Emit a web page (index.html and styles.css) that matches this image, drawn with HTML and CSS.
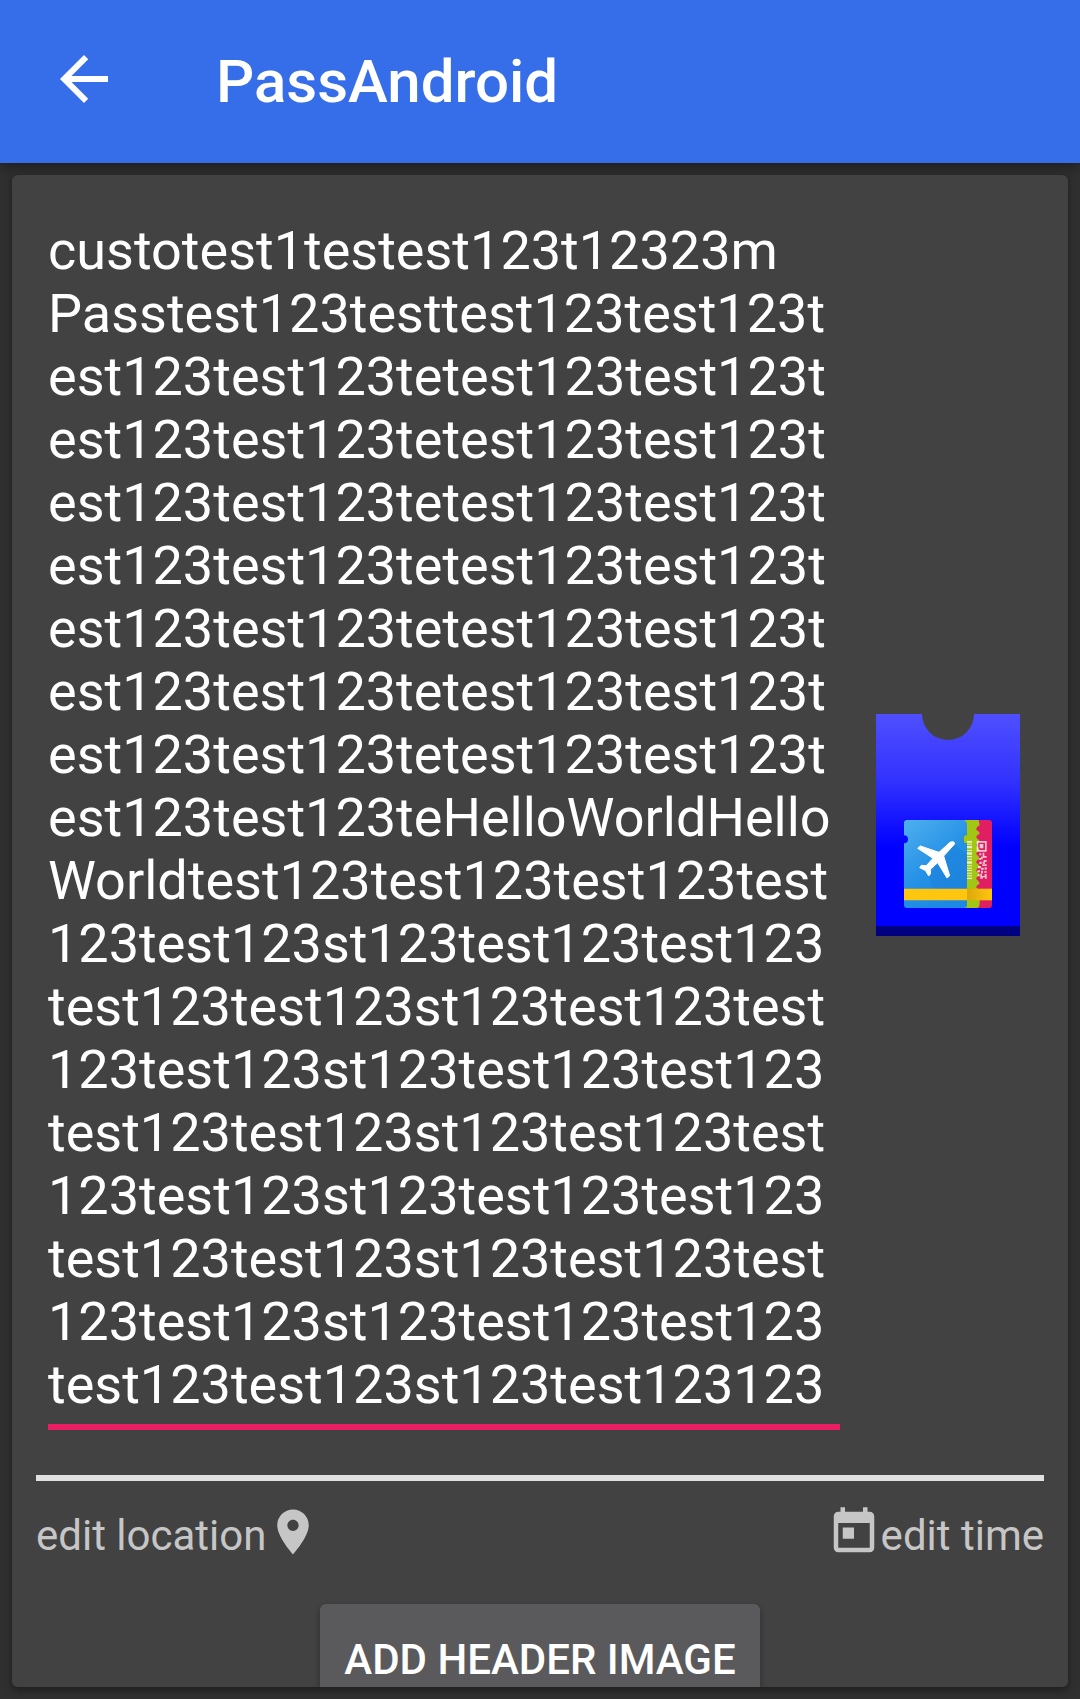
FILE: index.html
```html
<!DOCTYPE html>
<html lang="en">
<head>
<meta charset="utf-8">
<meta name="viewport" content="width=device-width, initial-scale=1">
<title>PassAndroid</title>
<link rel="stylesheet" href="styles.css">
</head>
<body>
<header class="toolbar">
  <button class="back" type="button" aria-label="Navigate up">
    <svg viewBox="0 0 24 24" aria-hidden="true"><path d="M20 11H7.83l5.59-5.59L12 4l-8 8 8 8 1.41-1.41L7.83 13H20v-2z"/></svg>
  </button>
  <h1 class="title">PassAndroid</h1>
</header>
<main class="content">
  <div class="card">
    <div class="summary">
      <textarea class="description" rows="19" aria-label="Description" spellcheck="false">custotest1testest123t12323m
Passtest123testtest123test123t
est123test123tetest123test123t
est123test123tetest123test123t
est123test123tetest123test123t
est123test123tetest123test123t
est123test123tetest123test123t
est123test123tetest123test123t
est123test123tetest123test123t
est123test123teHelloWorldHello
Worldtest123test123test123test
123test123st123test123test123
test123test123st123test123test
123test123st123test123test123
test123test123st123test123test
123test123st123test123test123
test123test123st123test123test
123test123st123test123test123
test123test123st123test123123</textarea>
      <button class="category" type="button" aria-label="Change category">
        <svg viewBox="48 42 432 666" aria-hidden="true">
          <defs>
            <linearGradient id="pass" x1="0" y1="0" x2="0" y2="1">
              <stop offset="0" stop-color="#4f4fff"/>
              <stop offset=".3" stop-color="#3232ff"/>
              <stop offset=".6" stop-color="#0000ff"/>
            </linearGradient>
            <linearGradient id="ticket" x1="0" y1="0" x2=".6" y2="1">
              <stop offset="0" stop-color="#4fb0ee"/>
              <stop offset=".6" stop-color="#2490e6"/>
              <stop offset="1" stop-color="#1e88e5"/>
            </linearGradient>
            <linearGradient id="fold" x1="0" y1="0" x2="1" y2="0">
              <stop offset="0" stop-color="#dca80c"/>
              <stop offset="1" stop-color="#ffc60c"/>
            </linearGradient>
          </defs>
          <path fill="url(#pass)" d="M48 42H186A78 78 0 0 0 342 42H480V708H48z"/>
          <path fill="#000080" d="M48 678H480V708H48z"/>
          <path fill="#e01e62" d="M340 360H387Q396 360 396 369V615Q396 624 387 624H340z"/>
          <path fill="#a2c614" d="M310 360H356L359 376Q348 382 349 389Q359 395 359 401Q348 406 349 413Q359 419 359 426Q348 431 349 438Q359 444 359 451Q348 456 349 463Q359 469 359 476Q348 481 349 488Q359 494 359 501Q348 506 349 513Q359 519 359 526Q348 531 349 538Q359 544 359 551Q348 556 349 563L359 570V610Q359 624 350 624H310z"/>
          <path fill="url(#ticket)" d="M141 360H312Q321 364 321 372V406A12 12 0 0 0 321 430V615Q321 624 312 624H141Q132 624 132 615V430A12 12 0 0 0 132 406V369Q132 360 141 360z"/>
          <path fill="#1c80d8" d="M284 432L321 464V566H220L207 530L233 489L262 535L270 528L252 468z" opacity=".5"/>
          <path fill="#ffc60f" d="M132 566H321V601H132z"/>
          <path fill="url(#fold)" d="M321 566H396V601H321z"/>
          <g fill="#fff" opacity=".75">
            <path d="M321 423h15v5h-15zM321 431h15v3h-15zM321 438h15v7h-15zM321 450h15v3h-15zM321 457h15v7h-15zM321 468h15v4h-15zM321 476h15v3h-15zM321 484h15v7h-15zM321 496h15v3h-15zM321 503h15v3h-15zM321 510h15v3h-15zM321 518h15v3h-15zM321 526h15v3h-15zM321 533h15v4h-15z"/>
            <path fill-rule="evenodd" d="M350 423H380V455H350zM355 428V450H375V428zM359 432H370V445H359z"/>
            <path d="M358 460h6v6h-6zM368 458h5v10h7v5h-12v5h-5v-8h5zM358 474h5v6h-5zM371 480h9v5h-5v6h-7v-6h3zM358 485h7v7h-7zM367 493h13v5h-13zM354 498h9v5h8v6h-8v-4h-9zM374 502h6v7h-6zM352 511h8v6h-8zM363 512h6v8h-6zM373 513h7v5h-7zM353 523h6v6h-6zM361 521h5v7h8v-6h6v14h-5v-4h-7v4h-7z"/>
          </g>
          <path fill="#fff" stroke="#fff" stroke-width="3" stroke-linejoin="round" d="M173 445L181 438L237 457L270 427Q285 421 283 433L251 468L269 527L261 534L233 488L211 508V522L206 528L197 512L179 503L184 496L199 497L219 475z"/>
        </svg>
      </button>
    </div>
    <hr class="divider">
    <div class="actions">
      <button class="action" type="button">edit location<svg viewBox="0 0 24 24" aria-hidden="true"><path d="M12 2C8.13 2 5 5.13 5 9c0 5.25 7 13 7 13s7-7.75 7-13c0-3.87-3.13-7-7-7zm0 9.5c-1.38 0-2.5-1.12-2.5-2.5s1.12-2.5 2.5-2.5 2.5 1.12 2.5 2.5-1.12 2.5-2.5 2.5z"/></svg></button>
      <button class="action" type="button"><svg viewBox="0 0 24 24" aria-hidden="true"><path d="M19 3h-1V1h-2v2H8V1H6v2H5c-1.11 0-1.99.9-1.99 2L3 19c0 1.1.89 2 2 2h14c1.1 0 2-.9 2-2V5c0-1.1-.9-2-2-2zm0 16H5V8h14v11zM7 10h5v5H7z"/></svg>edit time</button>
    </div>
    <button class="add-image" type="button">ADD HEADER IMAGE</button>
  </div>
</main>
</body>
</html>
```

FILE: styles.css
```css
* {
  box-sizing: border-box;
}

body {
  display: flex;
  flex-direction: column;
  height: 100vh;
  margin: 0;
  background: #303030;
  color: #fff;
  font-family: Roboto, sans-serif;
}

button {
  padding: 0;
  border: 0;
  background: none;
  color: inherit;
  font-family: inherit;
}

svg {
  display: block;
}

.toolbar {
  display: flex;
  flex: none;
  align-items: flex-start;
  gap: 96px;
  padding: 43px 48px 42px;
  background: #366de8;
  box-shadow: 0 4px 12px rgba(0, 0, 0, .4);
}

.back svg {
  width: 72px;
  height: 72px;
  fill: #fff;
}

.title {
  margin: 0;
  font-size: 60px;
  font-weight: 500;
  line-height: 78px;
}

.content {
  display: flex;
  flex: 1;
  min-height: 0;
  padding: 12px;
}

.card {
  display: flex;
  flex: 1;
  flex-direction: column;
  padding: 44px 24px 24px;
  overflow: auto;
  border-radius: 6px;
  background: #424242;
  box-shadow: 0 3px 8px rgba(0, 0, 0, .4);
  scrollbar-width: none;
}

.summary {
  display: flex;
  flex: none;
  align-items: center;
  gap: 36px;
  padding: 0 24px 0 12px;
}

.description {
  flex: 1;
  min-width: 0;
  padding: 0 0 8px;
  overflow: hidden;
  border: 0;
  border-bottom: 6px solid #e91e63;
  outline: 0;
  background: none;
  color: inherit;
  font-family: inherit;
  font-size: 54px;
  line-height: 63px;
  resize: none;
}

.category svg {
  width: 144px;
  height: 222px;
}

.divider {
  flex: none;
  width: 100%;
  height: 6px;
  margin: 45px 0 24px;
  border: 0;
  background: #e0e0e0;
}

.actions {
  display: flex;
  flex: none;
  justify-content: space-between;
}

.action {
  display: flex;
  align-items: flex-start;
  color: #c6c6c6;
  font-size: 42px;
  line-height: 62px;
}

.action svg {
  width: 54px;
  height: 54px;
  fill: currentColor;
}

.add-image {
  flex: none;
  align-self: center;
  height: 110px;
  margin-top: 37px;
  padding: 0 24px;
  border-radius: 6px;
  background: #5a5a5c;
  box-shadow: 0 3px 6px rgba(0, 0, 0, .3);
  font-size: 42px;
  font-weight: 500;
}
```
